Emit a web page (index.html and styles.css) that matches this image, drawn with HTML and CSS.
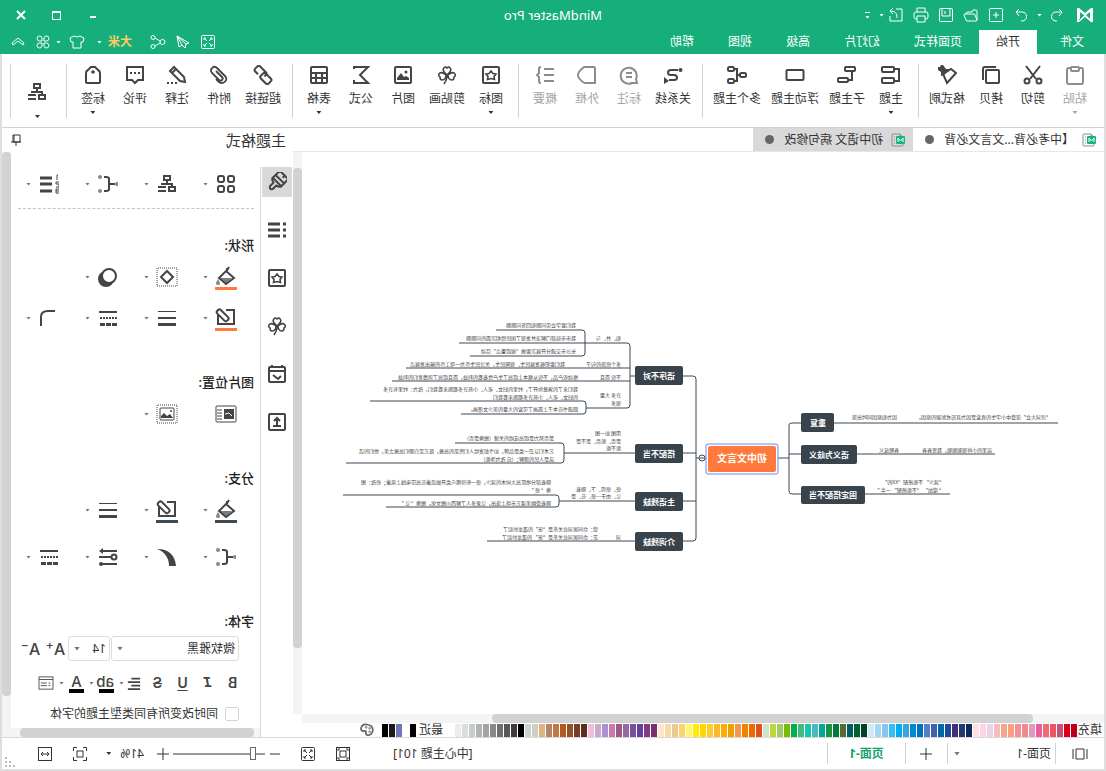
FILE: index.html
```html
<!DOCTYPE html>
<html lang="zh-CN">
<head>
<meta charset="utf-8">
<title>MindMaster Pro</title>
<link rel="stylesheet" href="styles.css">
</head>
<body>
<svg class="sprite" aria-hidden="true">
  <symbol id="undo" viewBox="0 0 16 16"><path d="M6 2 3 5l3 4M3 5h6c6 0 6 9 0 9H8"/></symbol>
  <symbol id="redo" viewBox="0 0 16 16"><path d="M10 2l3 3-3 4M13 5H7c-6 0-6 9 0 9h1"/></symbol>
  <symbol id="plusbox" viewBox="0 0 16 16"><rect x="1.500" y="1.500" width="13" height="13" rx="1"/><path d="M8 5v6M5 8h6"/></symbol>
  <symbol id="folder" viewBox="0 0 16 16"><path d="M2 13V4q0-1 1-1h3l1 2h4q2 0 2 2M2 13l2-5q0-1 1-1h9q1 0 1 1l-2 5q0 1-1 1H3q-1 0-1-1z"/></symbol>
  <symbol id="save" viewBox="0 0 16 16"><rect x="1.500" y="1.500" width="13" height="13" rx="1"/><path d="M4 2v7h8V2M9 4v3"/></symbol>
  <symbol id="print" viewBox="0 0 16 16"><path d="M4 5V1h8v4M4 12H3q-2 0-2-2V7q0-2 2-2h10q2 0 2 2v3q0 2-2 2h-1M4 9h8v6H4z"/></symbol>
  <symbol id="export" viewBox="0 0 16 16"><path d="M8 2H2v12h12V9M7 11c0-5 2-7 7-7M11 1l3 3-3 3"/></symbol>
  <symbol id="expand" viewBox="0 0 16 16"><rect x="1.500" y="1.500" width="13" height="13" rx="1"/><path d="M4 6V4h2M4 4l3 3M10 4h2v2M12 4 9 7M4 10v2h2M4 12l3-3M12 10v2h-2M12 12 9 9"/></symbol>
  <symbol id="send" viewBox="0 0 16 16"><path d="M14 2 2 9l3 1 1 4 3-3 3 2zM14 2 5 10M14 2 9 11"/></symbol>
  <symbol id="share" viewBox="0 0 16 16"><circle cx="3.500" cy="8" r="2.500"/><circle cx="13" cy="3.500" r="2"/><circle cx="13" cy="12.500" r="2"/><path d="M6 7l5-3M6 9l5 3"/></symbol>
  <symbol id="shirt" viewBox="0 0 16 16"><path d="M5 2 1 4l1 4h2v6h8V8h2l1-4-4-2q-3 2-6 0z"/></symbol>
  <symbol id="apps" viewBox="0 0 16 16"><path d="M7 7V4a2.500 2.500 0 1 0-2.500 3zM9 7V4a2.500 2.500 0 1 1 2.500 3zM7 9v3a2.500 2.500 0 1 1-2.500-3zM9 9v3a2.500 2.500 0 1 0 2.500-3z"/></symbol>
  <symbol id="up" viewBox="0 0 16 16"><path d="M2 9l6-5 6 5-1 2-5-4-5 4z"/></symbol>

  <symbol id="paste" viewBox="0 0 20 20"><path d="M6 3H4q-2 0-2 2v12q0 2 2 2h12q2 0 2-2V5q0-2-2-2h-2"/><rect x="6" y="2" width="8" height="4" rx="1"/></symbol>
  <symbol id="cut" viewBox="0 0 20 20"><path d="M3 1l10 13M17 1 7 14"/><circle cx="4" cy="16" r="2.500"/><circle cx="16" cy="16" r="2.500"/></symbol>
  <symbol id="copy" viewBox="0 0 20 20"><rect x="2" y="5" width="13" height="13" rx="1"/><path d="M5 2h11q2 0 2 2v11"/></symbol>
  <symbol id="brush" viewBox="0 0 20 20"><path d="M1 8l9 10 4-9-8-5z"/><path class="f" d="M6 4h5l3-4h2l1 2h2v3l-3 2v4l-3-1z"/></symbol>
  <symbol id="topic" viewBox="0 0 20 20"><rect x="7" y="2" width="12" height="5" rx="1"/><rect x="7" y="13" width="12" height="5" rx="1"/><path d="M7 4H2v12h5"/></symbol>
  <symbol id="subtopic" viewBox="0 0 20 20"><rect x="2" y="2" width="10" height="4" rx="1"/><rect x="9" y="13" width="10" height="4" rx="1"/><path d="M5 6v9h4"/></symbol>
  <symbol id="float" viewBox="0 0 20 20"><rect x="1.500" y="5" width="17" height="10" rx="1"/></symbol>
  <symbol id="multi" viewBox="0 0 20 20"><rect x="1" y="8" width="6" height="4" rx="1.500"/><rect x="13" y="2" width="6" height="4" rx="1.500"/><rect x="13" y="14" width="6" height="4" rx="1.500"/><path d="M7 10h3M13 4h-3v12h3"/></symbol>
  <symbol id="relation" viewBox="0 0 20 20"><path d="M5 5h7q3 0 3 2.500T12 10H9q-3 0-3 2.500T9 15h5"/><circle class="f" cx="2.500" cy="5" r="2"/><path class="f" d="M14 12l5 3-5 4z" transform="rotate(180 16.500 15.500)"/></symbol>
  <symbol id="callout" viewBox="0 0 20 20"><path d="M2 18l1-4a8 8 0 1 1 4 4zM7 8h6M7 12h6"/></symbol>
  <symbol id="outer" viewBox="0 0 20 20"><path d="M3 2h9q2 0 6 5 2 3 0 6-4 5-6 5H2V3z"/></symbol>
  <symbol id="summary" viewBox="0 0 20 20"><path d="M1 4h10M1 10h10M1 16h10M14 2q2 0 2 2v4l2 2-2 2v4q0 2-2 2"/></symbol>
  <symbol id="star" viewBox="0 0 20 20"><rect x="2" y="2" width="16" height="16" rx="1"/><path d="M10 6l2 2.500 3 .5-2 2.500.500 3L10 13.500 6.500 14.500 7 11.500 5 9l3-.5z" stroke-width="1.600"/></symbol>
  <symbol id="clover" viewBox="0 0 20 20"><path d="M10 10C7 7 5 5 7 3q1-2 3 0 2-2 3 0c2 2 0 4-3 7zM9 10C6 7 3 7 2 9q-1 2 1 3 0 3 2 3c3 0 4-3 4-5zM11 10c3-3 6-3 7-1q1 2-1 3 0 3-2 3c-3 0-4-3-4-5zM10 11q0 4 3 8" stroke-width="1.600"/></symbol>
  <symbol id="image" viewBox="0 0 20 20"><rect x="2" y="2" width="16" height="16" rx="1"/><path class="f" d="M4 15v-2l3-2 2 1 3-4 4 5v2z"/><circle class="f" cx="7" cy="7" r="1.500"/></symbol>
  <symbol id="sigma" viewBox="0 0 20 20"><path d="M17 4V2H3l8 8-8 8h14v-3"/></symbol>
  <symbol id="table" viewBox="0 0 20 20"><rect x="2" y="2" width="16" height="16" rx="1"/><path d="M2 8h16M2 13h16M7 8v10M13 8v10"/></symbol>
  <symbol id="link" viewBox="0 0 20 20"><g transform="rotate(-45 10 10)"><rect x="0" y="7" width="11" height="7" rx="2"/><path d="M8 10V8q0-2 2-2h8q2 0 2 2v3q0 2-2 2h-4"/></g></symbol>
  <symbol id="clip" viewBox="0 0 20 20"><path d="M13 6l-6 6c-2 2 1 5 3 3l7-7c3-4-2-8-5-5l-8 8c-4 4 2 9 6 6l3-3" stroke-width="1.800"/></symbol>
  <symbol id="pencil" viewBox="0 0 20 20"><path d="M2 17l1-5L13 2l4 4L7 16zM11 4l4 4"/><path d="M10 18h2M14 18h2M18 18h2"/></symbol>
  <symbol id="comment" viewBox="0 0 20 20"><path d="M2 2h16v13h-5l-3 3-3-3H2z"/><path d="M5 8h2M9 8h2M13 8h2"/></symbol>
  <symbol id="tag" viewBox="0 0 20 20"><path d="M3 8q0-2 2-3l3-3h4l3 3q2 1 2 3v9q0 1-1 1H4q-1 0-1-1z"/><circle class="f" cx="10" cy="7" r="1.800"/></symbol>
  <symbol id="layout" viewBox="0 0 20 20"><rect x="7" y="2" width="6" height="4"/><rect x="2" y="13" width="6" height="4"/><path d="M10 6v4M5 13v-3h10v1M11 13h8M11 17h8"/></symbol>

  <symbol id="roller" viewBox="0 0 20 20"><g transform="rotate(-45 10 10)"><path d="M4 0h12v10H4zM4 6h12M9 0v3M4 10q0 2 4 3v5q2 3 4 0v-5q4-1 4-3"/></g></symbol>
  <symbol id="list" viewBox="0 0 20 20"><path d="M7 4h12M7 10h12M7 16h12" stroke-width="3"/><path d="M1 4h3M1 10h3M1 16h3" stroke-width="3"/></symbol>
  <symbol id="calendar" viewBox="0 0 20 20"><rect x="2" y="3" width="16" height="15" rx="1"/><path d="M2 7h16M5 1v3M15 1v3M6 12l3 3 5-4"/></symbol>
  <symbol id="upload" viewBox="0 0 20 20"><rect x="2" y="2" width="16" height="16" rx="1"/><path d="M6 14h8M10 13V7M7 9l3-3 3 3"/></symbol>
  <symbol id="four" viewBox="0 0 20 20"><rect x="2" y="2" width="6" height="6" rx="2"/><rect x="12" y="2" width="6" height="6" rx="2"/><rect x="2" y="12" width="6" height="6" rx="2"/><rect x="12" y="12" width="6" height="6" rx="2"/></symbol>
  <symbol id="bracket" viewBox="0 0 20 20"><path d="M3 10h6M14 3h-2q-3 0-3 2v10q0 2 3 2h2"/><g class="g"><circle cx="1" cy="10" r="2"/><circle cx="18" cy="3" r="2"/><circle cx="18" cy="17" r="2"/></g></symbol>
  <symbol id="numbers" viewBox="0 0 20 20"><path d="M7 4h12M7 10h12M7 17h12" stroke-width="3"/><path d="M1 1h1v5M0 8h3v2H0v3h3M0 15h3v4H0M0 17h3" stroke-width="1"/></symbol>
  <symbol id="bucket" viewBox="0 0 24 24"><path d="M11 2v3M4 12l8-7 7 7-7 6zM9 1l3 5"/><path class="f" d="M6 12h12l-6 5z" opacity=".7"/><path class="g" d="M20 13q4 6 0 6t0-6z"/><path class="bar" d="M1 21h22v4H1z"/></symbol>
  <symbol id="border" viewBox="0 0 24 24"><path d="M12 3H4v14h16V8"/><rect x="13" y="1" width="5" height="14" rx="2" transform="rotate(45 15 8)"/><path class="bar" d="M1 21h22v4H1z"/></symbol>
  <symbol id="shape" viewBox="0 0 22 20"><rect x="1" y="1" width="20" height="18" stroke-width="1" stroke-dasharray="1 1"/><path d="M11 4l6 6-6 6-6-6z"/></symbol>
  <symbol id="shadow" viewBox="0 0 20 20"><circle class="f" cx="12" cy="12" r="8"/><circle cx="9" cy="9" r="7" class="paper"/></symbol>
  <symbol id="weights" viewBox="0 0 20 20"><path d="M1 3.500h18" stroke-width="1"/><path d="M1 10h18"/><path d="M1 16.500h18" stroke-width="3"/></symbol>
  <symbol id="dashes" viewBox="0 0 20 20"><path d="M1 4h18"/><path d="M1 10h18" stroke-dasharray="2 1"/><path d="M1 16.500h18" stroke-width="3" stroke-dasharray="5 1"/></symbol>
  <symbol id="corner" viewBox="0 0 20 20"><path d="M4 3h7q7 0 7 6v9"/></symbol>
  <symbol id="imgtext" viewBox="0 0 22 20"><rect x="1" y="2" width="20" height="16" rx="1" stroke-width="1"/><path class="f" d="M3 5h10v10H3z"/><path d="M15 6h5M15 9h5M15 12h5M15 15h5" stroke-width="1"/><path d="M5 12l3-3 4 1" stroke="#fff" stroke-width="1"/></symbol>
  <symbol id="imgframe" viewBox="0 0 22 20"><rect x="1" y="1" width="20" height="18" stroke-width="1" stroke-dasharray="1 1"/><rect x="4" y="4" width="14" height="12" rx="1" stroke-width="1"/><path class="f" d="M5 14l3-4 3 2 3-3 3 3v2z"/><circle class="f" cx="7" cy="7" r="1"/></symbol>
  <symbol id="taper" viewBox="0 0 20 20"><path class="f" d="M1 19C2 8 8 2 20 2 12 5 8 11 8 19z"/></symbol>
  <symbol id="ends" viewBox="0 0 20 20"><path d="M1 4h15M1 17h15M7 10h12"/><circle cx="4" cy="10" r="2.500"/><path class="f" d="M15 1l4 3-4 3z"/><circle class="f" cx="17" cy="17" r="2"/></symbol>
  <symbol id="align" viewBox="0 0 16 16"><path d="M1 3h10M1 7h14M1 11h10M1 15h14"/></symbol>
  <symbol id="textbox" viewBox="0 0 18 16"><rect x="1" y="1" width="16" height="14"/><path d="M1 4h16M4 8h2M8 8h7M4 11h2M8 11h7"/></symbol>

  <symbol id="pages" viewBox="0 0 16 16"><path d="M1 3v10M15 3v10M4 3h8v10H4z"/></symbol>
  <symbol id="fit" viewBox="0 0 16 16"><rect x="1.500" y="1.500" width="13" height="13"/><rect x="5" y="5" width="6" height="6"/><path d="M3 5V3h2M11 3h2v2M3 11v2h2M13 11v2h-2"/></symbol>
  <symbol id="focus" viewBox="0 0 16 16"><rect x="5" y="5" width="6" height="6"/><path d="M1.500 5V1.500H5M11 1.500h3.500V5M1.500 11v3.500H5M14.500 11v3.500H11"/></symbol>
  <symbol id="fitw" viewBox="0 0 16 16"><rect x="1.500" y="1.500" width="13" height="13"/><path d="M4 8h8M6 6 4 8l2 2M10 6l2 2-2 2"/></symbol>
  <symbol id="plus" viewBox="0 0 12 12"><path d="M6 0v12M0 6h12"/></symbol>
  <symbol id="minus" viewBox="0 0 12 12"><path d="M1 6h10"/></symbol>
  <symbol id="palette" viewBox="0 0 16 16"><path d="M7 2c9-2 10 9 4 7-4-1 1 4-4 5C0 14-1 3 7 2z" stroke-width="2"/><circle cx="5" cy="6" r="1"/><circle cx="9" cy="5" r="1"/><circle cx="5" cy="10" r="1"/></symbol>
  <symbol id="doc" viewBox="0 0 14 14"><path d="M5 1h7q1 0 1 1v10q0 1-1 1H3q-1 0-1-1V4z" stroke="#8a8f8c"/><path d="M5 1v3H2M10 4h1M10 7h1M10 10h1" stroke="#8a8f8c"/><rect x="0" y="3" width="9" height="8" rx="1" fill="#12b57c" stroke="none"/><path d="M2 9V5l2.500 3L7 5v4" stroke="#fff"/></symbol>
  <symbol id="pin" viewBox="0 0 12 14"><path d="M2 2h7v7H2zM1 9h10M6 9v4M8 2v7"/></symbol>
</svg>

<div class="app">
  <header class="header">
    <div class="titlebar">
      <div class="quick">
        <svg class="logo" viewBox="0 0 18 16"><path d="M1 2q0-2 2-1l6 5 6-5q2-1 2 1v12q0 2-2 1L9 10l-6 5q-2 1-2-1z" fill="#fff"/><path d="M4 5l4 3-4 4zM14 5v7l-4-4z" fill="#16ae7a"/><path d="M10 8l5 5" stroke="#16ae7a"/></svg>
        <button class="q" aria-label="撤销"><svg><use href="#undo"/></svg></button><span class="caret tight"></span>
        <button class="q" aria-label="恢复"><svg><use href="#redo"/></svg></button>
        <button class="q" aria-label="新建"><svg><use href="#plusbox"/></svg></button>
        <button class="q" aria-label="打开"><svg><use href="#folder"/></svg></button>
        <button class="q" aria-label="保存"><svg><use href="#save"/></svg></button>
        <button class="q" aria-label="打印"><svg><use href="#print"/></svg></button>
        <button class="q" aria-label="导出"><svg><use href="#export"/></svg></button><span class="caret"></span>
        <button class="more" aria-label="自定义"><span class="caret"></span></button>
      </div>
      <h1 class="title">MindMaster Pro</h1>
      <div class="window">
        <button aria-label="最小化"><i class="min"></i></button>
        <button aria-label="最大化"><i class="max"></i></button>
        <button aria-label="关闭"><svg viewBox="0 0 10 10"><path d="M1 1l8 8M9 1 1 9"/></svg></button>
      </div>
    </div>
    <div class="tabbar">
      <nav class="tabs">
        <button class="file">文件</button><button class="on">开始</button><button>页面样式</button><button>幻灯片</button><button>高级</button><button>视图</button><button>帮助</button>
      </nav>
      <div class="tools">
        <button class="q" aria-label="全屏"><svg><use href="#expand"/></svg></button>
        <button class="q" aria-label="发送"><svg><use href="#send"/></svg></button>
        <button class="q" aria-label="分享"><svg><use href="#share"/></svg></button>
        <button class="user">大米</button><span class="caret wide"></span>
        <button class="q shirt" aria-label="皮肤"><svg><use href="#shirt"/></svg></button><span class="caret"></span>
        <button class="q" aria-label="应用"><svg><use href="#apps"/></svg></button>
        <button class="q" aria-label="收起"><svg><use href="#up"/></svg></button>
      </div>
    </div>
  </header>

  <div class="frame">
    <div class="ribbon">
      <div class="group">
        <button class="tool off"><svg><use href="#paste"/></svg>粘贴<span class="caret"></span></button>
        <button class="tool"><svg><use href="#cut"/></svg>剪切</button>
        <button class="tool"><svg><use href="#copy"/></svg>拷贝</button>
        <button class="tool"><svg><use href="#brush"/></svg>格式刷</button>
      </div>
      <div class="group">
        <button class="tool"><svg><use href="#topic"/></svg>主题<span class="caret"></span></button>
        <button class="tool"><svg><use href="#subtopic"/></svg>子主题</button>
        <button class="tool"><svg><use href="#float"/></svg>浮动主题</button>
        <button class="tool"><svg><use href="#multi"/></svg>多个主题</button>
      </div>
      <div class="group">
        <button class="tool"><svg><use href="#relation"/></svg>关系线</button>
        <button class="tool off"><svg><use href="#callout"/></svg>标注</button>
        <button class="tool off"><svg><use href="#outer"/></svg>外框</button>
        <button class="tool off"><svg><use href="#summary"/></svg>概要</button>
      </div>
      <div class="group">
        <button class="tool"><svg><use href="#star"/></svg>图标<span class="caret"></span></button>
        <button class="tool"><svg><use href="#clover"/></svg>剪贴画</button>
        <button class="tool"><svg><use href="#image"/></svg>图片</button>
        <button class="tool"><svg><use href="#sigma"/></svg>公式</button>
        <button class="tool"><svg><use href="#table"/></svg>表格<span class="caret"></span></button>
      </div>
      <div class="group">
        <button class="tool"><svg><use href="#link"/></svg>超链接</button>
        <button class="tool"><svg><use href="#clip"/></svg>附件</button>
        <button class="tool"><svg><use href="#pencil"/></svg>注释</button>
        <button class="tool"><svg><use href="#comment"/></svg>评论</button>
        <button class="tool"><svg><use href="#tag"/></svg>标签<span class="caret"></span></button>
      </div>
      <div class="group last">
        <button class="tool big" aria-label="布局"><svg><use href="#layout"/></svg><span class="caret"></span></button>
      </div>
    </div>

    <main class="main">
      <section class="work">
        <div class="docs">
          <button class="doc on"><svg><use href="#doc"/></svg><span>【中考必背...文言文必背</span><i></i></button>
          <button class="doc"><svg><use href="#doc"/></svg><span>初中语文 病句修改</span><i></i></button>
        </div>
        <div class="stage">
          <svg class="map" viewBox="2 152 802 562" role="img" aria-label="初中文言文">
            <g class="wire">
              <path d="M328 458H317M317 458V425q0-2-3-2H48M317 454H111M317 458V491q0 3-3 3H156"/>
              <path d="M400 458H410M410 458V379q0-3 3-3H476M410 453H542M410 501H547M410 458V538q0 3 3 3H619"/>
              <path d="M476 376V346q0-3 3-3H647M476 368H700M476 381H714M476 376V405q0 3 3 3H520"/>
              <path d="M610 330H524q-3 0-3 3V353q0 3 3 3H636"/>
              <path d="M736 401H523q-3 0-3 3V411q0 3 3 3H645"/>
              <path d="M651 443H545q-3 0-3 3V460q0 3 3 3H760"/>
              <path d="M763 495H550q-3 0-3 3V504q0 3 3 3H720"/>
              <circle cx="404" cy="458" r="3" fill="#fff"/><path d="M402 458h4"/>
            </g>
            <g class="nodes">
              <rect x="272" y="413" width="33" height="19" rx="2"/><rect x="249" y="445" width="56" height="19" rx="2"/><rect x="241" y="486" width="64" height="18" rx="2"/>
              <rect x="423" y="366" width="48" height="19" rx="2"/><rect x="423" y="444" width="48" height="19" rx="2"/><rect x="423" y="492" width="48" height="19" rx="2"/><rect x="423" y="532" width="48" height="19" rx="2"/>
            </g>
            <rect class="ring" x="328" y="444" width="72" height="30" rx="2"/>
            <rect class="root" x="330" y="446" width="68" height="26" rx="2"/>
            <text class="roottext" x="364" y="462">初中文言文</text>
            <g class="nodetext">
              <text x="288" y="426">重复</text><text x="277" y="458">语义为歧义</text><text x="273" y="498">固定搭配不当</text>
              <text x="447" y="379">语序不对</text><text x="447" y="457">搭配不当</text><text x="447" y="505">主语残缺</text><text x="447" y="545">介词残缺</text>
            </g>
            <g class="note">
              <text x="55" y="419">“诗词大会”深受中小学生的喜爱是因为其形式新颖的原因。</text><text x="209" y="419">因为和原因同时出现</text>
              <text x="114" y="452">这里的小样很聪聪聪，我思春春</text><text x="207" y="452">春眠歧义</text>
              <text x="162" y="484">“减少” 不能搭配“XX的”</text><text x="162" y="492">“ 增加” “不能搭配” 一半 ”</text>
              <text x="485" y="340">和、并、与</text>
              <text x="530" y="327">我们要学会带问题和回答问题题</text>
              <text x="530" y="340">我市市局部门解决并发现了困民情相次面的问题题</text>
              <text x="530" y="353">长沙市交通分开展次要做“规提重点”活动</text>
              <text x="485" y="366">多个修饰的句子</text><text x="541" y="366">我们要积极发展民生、保障民生，关注民生作为一项工作的输出发展点</text>
              <text x="485" y="379">不仅 而且</text><text x="528" y="379">推动农产品，不仅从根本上提高了生产性着看的利益，而且提高了消费者们的利益</text>
              <text x="485" y="397">许多 大量</text><text x="485" y="405">很多</text>
              <text x="528" y="391">我们来了的满意你开了，村里的妇女、老人、小孩许多都跑来看我们，改为：村里有许多</text>
              <text x="528" y="399">的妇女、老人、小孩许多都跑来看我们</text>
              <text x="528" y="411">圆通书在本子上面画了可爱的大量的美少女漫画。</text>
              <text x="485" y="435">用图 如一图</text><text x="485" y="443">是否、能否、是不是</text><text x="485" y="450">能不能</text>
              <text x="552" y="440">是否努力是提高成绩的关键（图像是否）</text>
              <text x="552" y="453">艺术们认识一类是品牌，如今却发给人们所见的高雅，既艺足白丽们高雅之美，他们的话</text>
              <text x="552" y="461">这是人民的理解；（应 改为净能）</text>
              <text x="485" y="491">使、使得、下、随着</text><text x="485" y="498">让、由于…使、在、是</text>
              <text x="555" y="484">随着部分地区高大树木的减少，使一些珍稀鸟类开始造巢在高压电线上筑巢；修改：图</text>
              <text x="555" y="492">像“ 使 ”</text>
              <text x="555" y="505">随着受欧美课艺市场上涨出，让更多人了解西川图文化。图像“ 让 ”</text>
              <text x="508" y="531">错：命同斑词总关系是“张”的遇龙妙起了</text>
              <text x="485" y="539">词</text><text x="508" y="539">正：命同斑词总关系是“张” 的遇龙妙起了</text>
            </g>
          </svg>
          <div class="vbar"><i></i></div>
        </div>
        <div class="hbar"><i></i></div>
        <div class="colors">
          <span class="fill">填充</span><div class="swatches" id="palette-colors"></div>
          <span class="recent">最近</span><div class="swatches" id="recent-colors"></div>
          <button class="pal" aria-label="更多颜色"><svg><use href="#palette"/></svg></button>
        </div>
      </section>

      <aside class="panel">
        <div class="phead"><h2>主题格式</h2><button aria-label="固定"><svg><use href="#pin"/></svg></button></div>
        <div class="pbody">
          <nav class="side">
            <button class="on" aria-label="格式"><svg><use href="#roller"/></svg></button>
            <button aria-label="大纲"><svg><use href="#list"/></svg></button>
            <button aria-label="图标"><svg><use href="#star"/></svg></button>
            <button aria-label="剪贴画"><svg><use href="#clover"/></svg></button>
            <button aria-label="任务"><svg><use href="#calendar"/></svg></button>
            <button aria-label="导出"><svg><use href="#upload"/></svg></button>
          </nav>
          <div class="props">
            <div class="fields">
              <div class="row first">
                <button class="opt" aria-label="布局"><svg><use href="#four"/></svg><span class="caret"></span></button>
                <button class="opt" aria-label="结构"><svg><use href="#layout"/></svg><span class="caret"></span></button>
                <button class="opt" aria-label="连线"><svg><use href="#bracket"/></svg><span class="caret"></span></button>
                <button class="opt" aria-label="编号"><svg><use href="#numbers"/></svg><span class="caret"></span></button>
              </div>
              <h3 class="near">形状:</h3>
              <div class="row orange">
                <button class="opt" aria-label="填充"><svg class="tall"><use href="#bucket"/></svg><span class="caret"></span></button>
                <button class="opt" aria-label="形状"><svg class="broad"><use href="#shape"/></svg><span class="caret"></span></button>
                <button class="opt" aria-label="阴影"><svg><use href="#shadow"/></svg><span class="caret"></span></button>
              </div>
              <div class="row orange next">
                <button class="opt" aria-label="边框颜色"><svg class="tall"><use href="#border"/></svg><span class="caret"></span></button>
                <button class="opt" aria-label="粗细"><svg><use href="#weights"/></svg><span class="caret"></span></button>
                <button class="opt" aria-label="虚线"><svg><use href="#dashes"/></svg><span class="caret"></span></button>
                <button class="opt" aria-label="圆角"><svg><use href="#corner"/></svg><span class="caret"></span></button>
              </div>
              <h3>图片位置:</h3>
              <div class="row">
                <button class="opt" aria-label="位置"><svg class="broad"><use href="#imgtext"/></svg></button>
                <button class="opt" aria-label="大小"><svg class="broad"><use href="#imgframe"/></svg><span class="caret"></span></button>
              </div>
              <h3>分支:</h3>
              <div class="row slate">
                <button class="opt" aria-label="填充"><svg class="tall"><use href="#bucket"/></svg><span class="caret"></span></button>
                <button class="opt" aria-label="颜色"><svg class="tall"><use href="#border"/></svg><span class="caret"></span></button>
                <button class="opt" aria-label="粗细"><svg><use href="#weights"/></svg><span class="caret"></span></button>
              </div>
              <div class="row apart">
                <button class="opt" aria-label="连线"><svg><use href="#bracket"/></svg><span class="caret"></span></button>
                <button class="opt" aria-label="渐变"><svg><use href="#taper"/></svg><span class="caret"></span></button>
                <button class="opt" aria-label="箭头"><svg><use href="#ends"/></svg><span class="caret"></span></button>
                <button class="opt" aria-label="虚线"><svg><use href="#dashes"/></svg><span class="caret"></span></button>
              </div>
              <h3>字体:</h3>
              <div class="fonts">
                <span class="pick face"><select aria-label="字体"><option>微软雅黑</option></select></span>
                <span class="pick size"><select aria-label="字号"><option>14</option></select></span>
                <button class="grow" aria-label="增大">A<sup>+</sup></button>
                <button class="grow" aria-label="减小">A<sup>−</sup></button>
              </div>
              <div class="format">
                <button class="b">B</button><button class="it">I</button><button class="u">U</button><button class="s">S</button>
                <button class="al" aria-label="对齐"><svg><use href="#align"/></svg></button><span class="caret"></span>
                <button class="ink">ab</button><span class="caret"></span>
                <button class="ink">A</button><span class="caret"></span>
                <button class="tb" aria-label="文本框"><svg><use href="#textbox"/></svg></button>
              </div>
              <label class="check"><input type="checkbox">同时改变所有同类型主题的字体</label>
            </div>
            <div class="phbar"><i></i></div>
          </div>
          <div class="pvbar"><i></i></div>
        </div>
      </aside>
    </main>

    <footer class="status">
      <button class="outline" aria-label="页面列表"><svg><use href="#pages"/></svg></button>
      <span class="pick page"><select aria-label="页面"><option>页面-1</option></select></span>
      <button class="add" aria-label="新增页面"><svg class="s12"><use href="#plus"/></svg></button>
      <button class="current">页面-1</button>
      <span class="info">[中心主题 101]</span>
      <div class="zoom">
        <button class="z" aria-label="适应"><svg><use href="#fit"/></svg></button>
        <button class="z" aria-label="全屏"><svg><use href="#expand"/></svg></button>
        <button class="zs" aria-label="缩小"><svg class="s12"><use href="#minus"/></svg></button>
        <input type="range" min="0" max="100" value="10" aria-label="缩放">
        <button class="zs" aria-label="放大"><svg class="s12"><use href="#plus"/></svg></button>
        <button class="pct">41%<span class="caret"></span></button>
        <button class="z" aria-label="聚焦"><svg><use href="#focus"/></svg></button>
        <button class="z" aria-label="适应宽度"><svg><use href="#fitw"/></svg></button>
      </div>
      <svg class="grip" viewBox="0 0 10 10"><path d="M8 0h2v2H8zM4 4h2v2H4zM8 4h2v2H8zM0 8h2v2H0zM4 8h2v2H4zM8 8h2v2H8z"/></svg>
    </footer>
  </div>
</div>
<script src="app.js"></script>
</body>
</html>
```

FILE: app.js
```js
const palette = `b8001a d9001b c8507a ed5565 f06a78 e85f9e e298c0 ee8a8a f19199 ff9f7f f4a58e f7bcc0 e9d4ea fbd5e7 fde0e6
10285a 233b75 452d7b 1b4b9b 0068a8 4062ae 5580c4 0072c0 0088d0 3aa5dc 00adef 2fc0f5 8ac4ee a0d8ef cfe9f5
00402a 006030 006060 556b2f 007a40 1f9440 00a89a 4fb8be 12c8b0 46b87c 00b04f 7cb80e a0ce62 bcd63c cbe5c5
e05020 ee6a00 f08200 f19850 f0a000 fbae00 fbb830 fccc30 ffd800 ffee00 fff37a fcd46c ebc898 fbd8a8 fde6cc
7a3070 803c80 68409a 7850a0 9868a0 a05888 cc78b0 ac90d0 c8a8cc ecc0dc
5c2c1c 783c2c 985028 b05a28 c07a40 b48468 dcb480 d4ccc4 c8d4cc
000000 403c3c 585858 707070 888888 a0a4a4 b0b4b4 c8cccc dcdcdc ececec`.split(/\s+/);
const recent = ['000000', 'ffffff', '6f76b8', '1a1a1a', '000000'];

function fill(id, colors) {
  const box = document.getElementById(id);
  for (const color of colors) {
    const swatch = document.createElement('button');
    swatch.setAttribute('aria-label', '#' + color);
    swatch.style.background = '#' + color;
    box.append(swatch);
  }
}

fill('palette-colors', palette);
fill('recent-colors', recent);
```

FILE: styles.css
```css
* { box-sizing: border-box; }
body {
  margin: 0;
  overflow: hidden;
  font: 12px/16px "Noto Sans", "Noto Sans CJK SC", sans-serif;
  color: #333;
}
button, select, input { font: inherit; color: inherit; }
button { padding: 0; border: 0; background: none; white-space: nowrap; }
h1, h2, h3 { margin: 0; font-weight: normal; }
svg { display: block; flex: none; fill: none; stroke: currentColor; overflow: visible; }
.sprite { position: absolute; width: 0; height: 0; }
.f { fill: currentColor; stroke: none; }
.g { fill: #888; stroke: none; }
.paper { fill: #fff; stroke: currentColor; }

/* The whole interface is shown flipped left to right. */
.app {
  display: flex;
  flex-direction: column;
  height: 100vh;
  transform: scaleX(-1);
}

.caret {
  flex: none;
  width: 5px;
  height: 3px;
  background: currentColor;
  clip-path: polygon(0 0, 100% 0, 50% 100%);
}

/* header */
.header { background: #16ae7a; color: #fff; }
.titlebar { display: flex; align-items: center; height: 30px; }
.quick { flex: 1; display: flex; align-items: center; padding-left: 3px; }
.logo { width: 18px; height: 16px; stroke: none; margin: 0 6px 0 9px; }
.q { display: grid; place-items: center; width: 25px; height: 22px; }
.q svg { width: 16px; height: 16px; }
.tight { margin: 0 3px; }
.more { border-top: 1px solid #fff; width: 5px; height: 7px; margin-left: 9px; display: flex; align-items: flex-end; }
.title { font-size: 13px; }
.window { flex: 1; display: flex; justify-content: flex-end; padding-right: 3px; }
.window button { display: grid; place-items: center; width: 36px; height: 27px; }
.window svg { width: 10px; height: 10px; stroke-width: 2; }
.min { width: 6px; height: 2px; background: #fff; margin-top: 4px; }
.max { width: 9px; height: 9px; border: 1px solid #fff; border-top-width: 2px; }
.tabbar { display: flex; height: 24px; }
.tabs { display: flex; padding-left: 5px; }
.tabs button { padding: 0 17px; height: 24px; }
.tabs .file { margin-right: 6px; }
.tabs .on { background: #fff; color: #333; }
.tools { display: flex; align-items: center; margin-left: auto; padding-right: 6px; }
.tools .user { color: #ffca5f; font-weight: bold; margin-left: 13px; }
.wide { margin-left: 6px; }
.shirt { margin: 0 4px 0 7px; }

/* frame */
.frame {
  flex: 1;
  min-height: 0;
  display: flex;
  flex-direction: column;
  border: solid #dedede;
  border-width: 0 2px 2px;
  background: #fff;
}
.ribbon { display: flex; height: 74px; padding: 10px 0 9px 8px; border-bottom: 1px solid #d2d2d2; }
.group { display: flex; padding-right: 5px; margin-right: 6px; border-right: 1px solid #d2d2d2; }
.tool {
  display: flex;
  flex-direction: column;
  align-items: center;
  min-width: 42px;
  padding: 1px 5px 0;
}
.tool svg { width: 20px; height: 20px; stroke-width: 2; color: #444; margin-bottom: 6px; }
.tool .caret { margin-top: 4px; }
.tool.off { color: #a5a5a5; }
.tool.off svg { color: #8c8c8c; }
.group.last { flex: 1; justify-content: center; margin-right: 8px; padding-right: 4px; }
.tool.big { padding-top: 18px; }
.tool.big .caret { margin-top: 7px; }

/* workspace */
.main { flex: 1; min-height: 0; display: flex; }
.work { flex: 1; min-width: 0; display: flex; flex-direction: column; }
.docs { display: flex; height: 24px; border-bottom: 1px solid #e6e6e6; }
.doc { display: flex; align-items: center; padding: 0 12px 0 8px; background: #d9d9d9; }
.doc svg { width: 14px; height: 14px; margin-right: 8px; }
.doc i { width: 9px; height: 9px; border-radius: 50%; background: #666; margin-left: 10px; }
.doc.on { background: #fff; }
.stage { flex: 1; min-height: 0; display: flex; }
.map { flex: 1; min-width: 0; height: 100%; font-family: "Noto Sans CJK SC", sans-serif; }
.wire { stroke: #3c4854; }
.nodes { fill: #38434c; stroke: none; }
.root { fill: #ff7a3c; stroke: none; }
.ring { stroke: #6f82f5; }
.map text { stroke: none; }
.roottext { fill: #fff; font-size: 10px; font-weight: bold; text-anchor: middle; }
.nodetext { fill: #fff; font-size: 8px; font-weight: bold; text-anchor: middle; }
.note { fill: #444; font-size: 5px; }
.vbar { width: 9px; background: #f4f4f4; padding-top: 16px; }
.vbar i { display: block; height: 88%; border-radius: 4px; background: #d2d2d2; }
.hbar { height: 9px; background: #f4f4f4; padding-left: 71px; margin-right: 9px; }
.hbar i { display: block; width: 74%; height: 9px; border-radius: 4px; background: #d2d2d2; }
.colors { display: flex; align-items: center; height: 14px; padding-left: 2px; line-height: 14px; }
.fill { width: 25px; }
.swatches { display: flex; gap: 1px; }
.swatches button { width: 6px; height: 13px; }
.recent { margin: 0 3px 0 12px; }
.pal { margin-left: 8px; color: #666; }
.pal svg { width: 14px; height: 14px; }

/* format panel */
.panel { width: 291px; display: flex; flex-direction: column; }
.phead { display: flex; align-items: center; justify-content: space-between; height: 24px; padding: 0 8px 0 7px; }
.phead h2 { font-size: 15px; line-height: 22px; }
.phead svg { width: 12px; height: 14px; }
.pbody { flex: 1; min-height: 0; display: flex; }
.side { display: flex; flex-direction: column; gap: 18px; width: 32px; padding: 15px 1px 0; }
.side button { display: grid; place-items: center; width: 30px; height: 30px; }
.side .on { background: #d9d9d9; }
.side svg, .opt svg { width: 20px; height: 20px; stroke-width: 2; color: #444; }
.props { flex: 1; min-width: 0; display: flex; flex-direction: column; border-left: 1px solid #d9d9d9; margin-top: 15px; }
.fields { flex: 1; padding: 0 7px 0 6px; margin-top: -3px; }
.row { display: flex; height: 40px; padding-left: 14px; }
.row.first { height: 45px; padding-bottom: 4px; border-bottom: 1px dashed #c4c4c4; }
.next { margin-top: 1px; }
.apart { margin-top: 7px; }
.opt { display: flex; align-items: center; flex: none; width: 59px; color: #777; }
.opt svg { margin: 0 4px; }
.opt .tall { width: 24px; height: 24px; margin: 2px 2px 0; }
.opt .broad { width: 22px; height: 20px; margin: 0 3px; }
.opt .caret { margin-left: 4px; }
.orange { --bar: #ff7a3c; }
.slate { --bar: #3b4a54; }
.bar { stroke: none; fill: var(--bar); }
.fields h3 { margin: 34px 0 2px; font-size: 13px; line-height: 20px; font-weight: 500; color: #222; }
.fields h3.near { margin-top: 26px; }
.fonts { display: flex; height: 25px; margin-top: 5px; padding-left: 15px; }
.pick { position: relative; display: flex; }
.pick select { appearance: none; width: 100%; padding: 0 3px; border: 1px solid #dcdcdc; border-radius: 3px; background: #fff; }
.pick::after {
  content: "";
  position: absolute;
  right: 6px;
  top: 50%;
  width: 6px;
  height: 4px;
  margin-top: -2px;
  background: #777;
  clip-path: polygon(0 0, 100% 0, 50% 100%);
}
.face { width: 128px; margin-right: 1px; }
.size { width: 42px; }
.grow { width: 25px; font: 500 16px/24px Inter, sans-serif; color: #444; text-align: center; }
.grow sup { font-size: 12px; line-height: 0; }
.format { display: flex; align-items: center; height: 22px; margin-top: 11px; padding-left: 9px; color: #777; }
.format button { width: 25px; height: 22px; font: 600 14px/20px Inter, sans-serif; color: #444; }
.format .it { font-family: "Liberation Mono", monospace; font-style: italic; font-weight: bold; }
.format .u { text-decoration: underline; text-underline-offset: 2px; }
.format .s { text-decoration: line-through; }
.format .al { width: 21px; }
.format .al svg { width: 14px; height: 14px; margin: 0 auto; stroke-width: 2; }
.format .ink { width: 15px; height: 20px; margin: 0 5px; line-height: 15px; border-bottom: 4px solid #000; font-weight: 500; font-size: 15px; }
.format .tb { width: 25px; }
.tb svg { width: 16px; height: 14px; margin: 0 auto; }
.check { display: flex; align-items: center; gap: 7px; height: 20px; margin-top: 10px; padding-left: 15px; }
.check input { appearance: none; width: 14px; height: 14px; margin: 0; border: 1px solid #d5d5d5; border-radius: 2px; background: #fff; }
.phbar { height: 9px; padding: 0 9px 0 6px; background: #f4f4f4; }
.phbar i { display: block; height: 9px; border-radius: 4px; background: #d2d2d2; }
.pvbar { width: 9px; background: #f4f4f4; }
.pvbar i { display: block; height: 93%; border-radius: 4px; background: #d2d2d2; }

/* status bar */
.status { display: flex; align-items: center; height: 32px; border-top: 1px solid #d9d9d9; }
.status svg { width: 16px; height: 16px; }
.status .s12 { width: 12px; height: 12px; }
.outline, .add { display: grid; place-items: center; height: 21px; border-right: 1px solid #d2d2d2; }
.outline { width: 49px; }
.add { width: 42px; }
.page { width: 108px; height: 21px; border-right: 1px solid #d2d2d2; }
.page select { border: 0; padding: 0 4px; }
.current { width: 78px; height: 21px; border-right: 1px solid #d2d2d2; color: #16a070; font-weight: bold; }
.info { margin: 0 38px 0 auto; }
.zoom { display: flex; align-items: center; }
.z { display: grid; place-items: center; width: 24px; margin-right: 11px; }
.zs { display: grid; place-items: center; width: 20px; }
.zoom input { appearance: none; width: 92px; height: 16px; margin: 0; background: none; }
.zoom input::-webkit-slider-runnable-track { height: 2px; background: #999; }
.zoom input::-webkit-slider-thumb { appearance: none; width: 6px; height: 13px; margin-top: -6px; border: 1px solid #666; background: #fff; }
.pct { display: flex; align-items: center; gap: 9px; width: 52px; margin: 0 0 0 9px; }
.grip { align-self: flex-end; margin: 0 3px 2px 7px; fill: #bbb; stroke: none; }
.status .grip { width: 10px; height: 10px; }
```
